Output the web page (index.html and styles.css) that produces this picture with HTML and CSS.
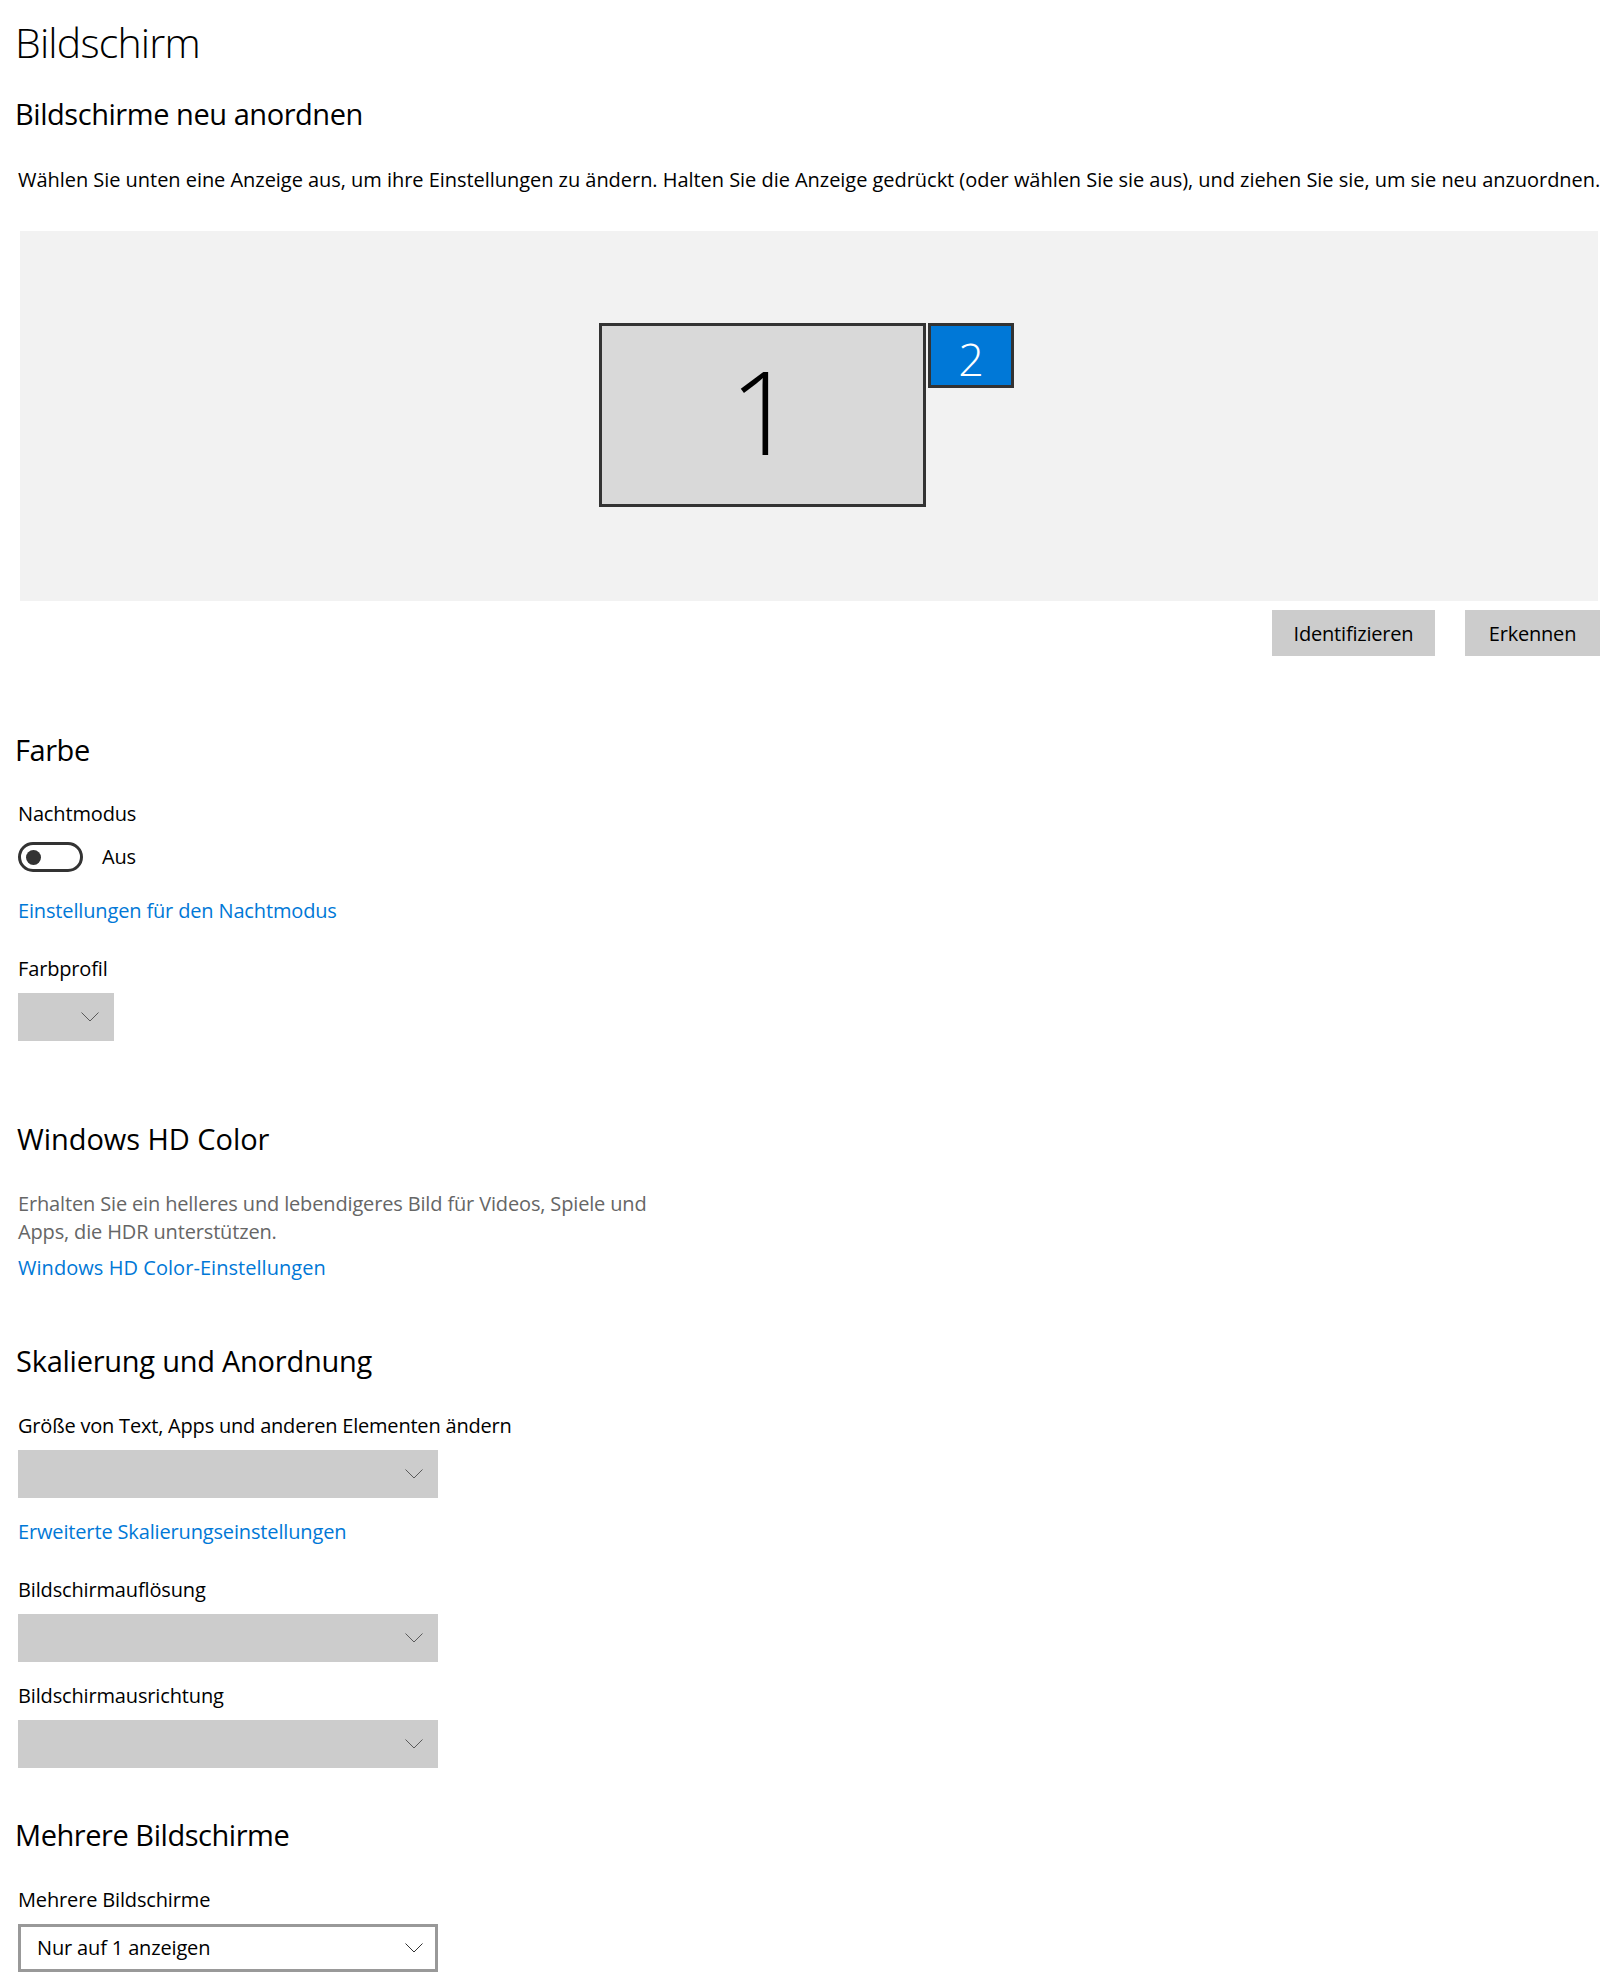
FILE: index.html
```html
<!DOCTYPE html>
<html lang="de">
<head>
<meta charset="utf-8">
<title>Bildschirm</title>
<link rel="stylesheet" href="styles.css">
</head>
<body>
<main class="page">
  <h1 class="title">Bildschirm</h1>

  <h2 class="heading h-arrange">Bildschirme neu anordnen</h2>
  <p class="text desc">Wählen Sie unten eine Anzeige aus, um ihre Einstellungen zu ändern. Halten Sie die Anzeige gedrückt (oder wählen Sie sie aus), und ziehen Sie sie, um sie neu anzuordnen.</p>
  <div class="arrange">
    <div class="monitor monitor-1">1</div>
    <div class="monitor monitor-2">2</div>
  </div>
  <div class="btn-row">
    <button class="btn btn-identify">Identifizieren</button>
    <button class="btn btn-detect">Erkennen</button>
  </div>

  <h2 class="heading h-color">Farbe</h2>
  <div class="text label l-night">Nachtmodus</div>
  <div class="toggle-row">
    <span class="toggle"><span class="knob"></span></span>
    <span class="text toggle-text">Aus</span>
  </div>
  <a class="text link lk-night" href="#">Einstellungen für den Nachtmodus</a>
  <div class="text label l-profile">Farbprofil</div>
  <div class="select select-small">
    <svg class="chev" width="18" height="10" viewBox="0 0 18 10"><path d="M0.5 0.5 L9 9 L17.5 0.5" fill="none" stroke="#5a5a5a" stroke-width="1"/></svg>
  </div>

  <h2 class="heading h-hdr">Windows HD Color</h2>
  <p class="text muted">Erhalten Sie ein helleres und lebendigeres Bild für Videos, Spiele und Apps, die HDR unterstützen.</p>
  <a class="text link lk-hdr" href="#">Windows HD Color-Einstellungen</a>

  <h2 class="heading h-scale">Skalierung und Anordnung</h2>
  <div class="text label l-size">Größe von Text, Apps und anderen Elementen ändern</div>
  <div class="select select-wide s-size">
    <svg class="chev" width="18" height="10" viewBox="0 0 18 10"><path d="M0.5 0.5 L9 9 L17.5 0.5" fill="none" stroke="#5a5a5a" stroke-width="1"/></svg>
  </div>
  <a class="text link lk-scale" href="#">Erweiterte Skalierungseinstellungen</a>
  <div class="text label l-res">Bildschirmauflösung</div>
  <div class="select select-wide s-res">
    <svg class="chev" width="18" height="10" viewBox="0 0 18 10"><path d="M0.5 0.5 L9 9 L17.5 0.5" fill="none" stroke="#5a5a5a" stroke-width="1"/></svg>
  </div>
  <div class="text label l-orient">Bildschirmausrichtung</div>
  <div class="select select-wide s-orient">
    <svg class="chev" width="18" height="10" viewBox="0 0 18 10"><path d="M0.5 0.5 L9 9 L17.5 0.5" fill="none" stroke="#5a5a5a" stroke-width="1"/></svg>
  </div>

  <h2 class="heading h-multi">Mehrere Bildschirme</h2>
  <div class="text label l-multi">Mehrere Bildschirme</div>
  <div class="select select-wide select-outlined s-multi">
    <span class="select-value">Nur auf 1 anzeigen</span>
    <svg class="chev" width="18" height="10" viewBox="0 0 18 10"><path d="M0.5 0.5 L9 9 L17.5 0.5" fill="none" stroke="#333" stroke-width="1"/></svg>
  </div>
</main>
</body>
</html>
```
FILE: styles.css
```css
html, body {
  margin: 0;
  padding: 0;
  background: #ffffff;
}

body {
  font-family: "Open Sans", "Noto Sans", sans-serif;
  color: #000;
}

.page {
  display: flex;
  flex-direction: column;
  align-items: flex-start;
  padding: 15px 24px 0 18px;
}

.title {
  margin: 0 0 0 -3px;
  font-size: 41px;
  font-weight: 300;
  line-height: 54px;
  letter-spacing: -0.8px;
}

.heading {
  margin: 0 0 0 -3px;
  font-size: 29px;
  font-weight: 400;
  line-height: 40px;
  letter-spacing: -0.45px;
}

.text {
  font-size: 20px;
  line-height: 28px;
  margin: 0;
  letter-spacing: -0.15px;
}

.desc {
  white-space: nowrap;
  letter-spacing: -0.04px;
}

.h-arrange { margin-top: 25px; }
.desc { margin-top: 32px; }

.arrange {
  position: relative;
  align-self: stretch;
  margin: 37px 2px 0 2px;
  height: 370px;
  background: #f2f2f2;
}

.monitor {
  position: absolute;
  box-sizing: border-box;
  border: 3px solid #333;
  display: flex;
  align-items: center;
  justify-content: center;
  font-weight: 300;
}

.monitor-1 {
  left: 579px;
  top: 92px;
  width: 327px;
  height: 184px;
  background: #d9d9d9;
  font-size: 116px;
  line-height: 1;
  padding-bottom: 11px;
}

.monitor-2 {
  left: 908px;
  top: 92px;
  width: 86px;
  height: 65px;
  background: #0078d7;
  color: #fff;
  font-size: 45px;
  line-height: 1;
  padding-top: 5px;
}

.btn-row {
  align-self: stretch;
  display: flex;
  justify-content: flex-end;
  gap: 30px;
  margin-top: 9px;
}

.btn {
  height: 46px;
  padding: 0;
  border: none;
  background: #cccccc;
  font-family: inherit;
  font-size: 20px;
  color: #000;
  letter-spacing: -0.2px;
}

.btn-identify { width: 163px; }
.btn-detect { width: 135px; }

.h-color { margin-top: 74px; }
.l-night { margin-top: 30px; }

.toggle-row {
  display: flex;
  align-items: center;
  height: 30px;
  margin-top: 14px;
}

.toggle {
  box-sizing: border-box;
  width: 65px;
  height: 30px;
  border: 3px solid #333;
  border-radius: 15px;
  display: flex;
  align-items: center;
  padding-left: 5px;
}

.knob {
  width: 15px;
  height: 15px;
  border-radius: 50%;
  background: #333;
}

.toggle-text {
  margin-left: 19px;
  line-height: 30px;
}

.link {
  color: #0078d7;
  text-decoration: none;
}

.lk-night { margin-top: 25px; }
.l-profile { margin-top: 30px; }

.select {
  position: relative;
  box-sizing: border-box;
  height: 48px;
  background: #cccccc;
  display: flex;
  align-items: center;
  justify-content: flex-end;
  padding-right: 15px;
}

.select-small {
  width: 96px;
  margin-top: 10px;
}

.select-wide {
  width: 420px;
}

.chev {
  display: block;
}

.h-hdr {
  margin-top: 78px;
  margin-left: -1px;
  letter-spacing: -0.05px;
}

.muted {
  color: #666666;
  width: 640px;
  margin-top: 31px;
}

.lk-hdr {
  margin-top: 8px;
  letter-spacing: 0.05px;
}

.h-scale {
  margin-top: 59px;
  margin-left: -2px;
  letter-spacing: -0.25px;
}
.l-size {
  margin-top: 31px;
  letter-spacing: -0.2px;
}
.s-size { margin-top: 10px; }
.lk-scale { margin-top: 20px; }
.l-res { margin-top: 30px; }
.s-res { margin-top: 10px; }
.l-orient { margin-top: 20px; }
.s-orient { margin-top: 10px; }

.h-multi { margin-top: 47px; }
.l-multi { margin-top: 31px; }
.s-multi { margin-top: 10px; }

.select-outlined {
  background: #ffffff;
  border: 3px solid #999999;
  justify-content: space-between;
  padding: 0 12px 0 16px;
}

.select-value {
  font-size: 20px;
  line-height: 28px;
  letter-spacing: -0.15px;
}
```
